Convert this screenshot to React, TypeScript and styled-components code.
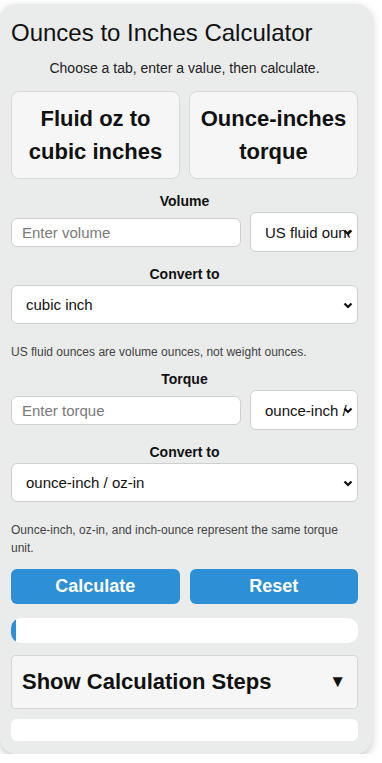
import styled, { createGlobalStyle } from "styled-components"

const GlobalStyle = createGlobalStyle`
	html, body {
		margin: 0;
		padding: 0;
		background: #ffffff;
		font-family: "Liberation Sans", Arial, sans-serif;
		color: #111;
	}
	* {
		box-sizing: border-box;
	}
`

const Page = styled.div`
	padding-top: 4px;
`

const Card = styled.div`
	width: 372px;
	background: #eaebeb;
	border-radius: 16px;
	box-shadow: 0 3px 8px rgba(0, 0, 0, 0.22);
	padding: 15px 14px 13px 11px;
	display: flex;
	flex-direction: column;
`

const Title = styled.h1`
	margin: 0;
	font-size: 24px;
	font-weight: 400;
	line-height: 28px;
	color: #111;
`

const Intro = styled.p`
	margin: 13px 0 0;
	font-size: 14px;
	line-height: 17px;
	text-align: center;
	color: #222;
`

const TabRow = styled.div`
	display: grid;
	grid-template-columns: 1fr 1fr;
	gap: 9px;
	margin-top: 14px;
`

const Tab = styled.button`
	height: 88px;
	background: #f6f6f6;
	border: 1px solid #d9d9d9;
	border-radius: 8px;
	font-family: inherit;
	font-size: 22px;
	font-weight: 700;
	line-height: 33px;
	color: #111;
	padding: 0 4px;
	cursor: pointer;
`

const FieldLabel = styled.div<{ $top: number }>`
	margin-top: ${(p) => p.$top}px;
	font-size: 14px;
	font-weight: 700;
	text-align: center;
	line-height: 17px;
	color: #111;
`

const InputRow = styled.div<{ $top: number }>`
	display: flex;
	align-items: center;
	gap: 9px;
	margin-top: ${(p) => p.$top}px;
`

const TextInput = styled.input`
	flex: 1;
	min-width: 0;
	height: 29px;
	border: 1px solid #cfcfcf;
	border-radius: 6px;
	background: #fff;
	padding: 0 10px;
	font-family: inherit;
	font-size: 15px;
	color: #111;
	outline: none;

	&::placeholder {
		color: #7a7a7a;
	}
`

const SelectWrap = styled.div<{ $w?: number; $top?: number }>`
	position: relative;
	width: ${(p) => (p.$w ? `${p.$w}px` : "100%")};
	flex: none;
	margin-top: ${(p) => p.$top ?? 0}px;
`

const Select = styled.select<{ $h: number }>`
	appearance: none;
	-webkit-appearance: none;
	display: block;
	width: 100%;
	height: ${(p) => p.$h}px;
	border: 1px solid #cfcfcf;
	border-radius: 6px;
	background: #fff;
	padding: 0 7px 0 14px;
	font-family: inherit;
	font-size: 15px;
	color: #111;
	outline: none;
	overflow: hidden;
`

const Chevron = styled.svg`
	position: absolute;
	right: 5px;
	top: 50%;
	margin-top: -3px;
	width: 10px;
	height: 7px;
	pointer-events: none;
`

const Note = styled.p<{ $top: number }>`
	margin: ${(p) => p.$top}px 0 0;
	font-size: 12px;
	line-height: 18px;
	color: #444;
`

const ButtonRow = styled.div`
	display: grid;
	grid-template-columns: 1fr 1fr;
	gap: 10px;
	margin-top: 12px;
`

const ActionButton = styled.button`
	height: 35px;
	background: #2d8fd5;
	border: none;
	border-radius: 6px;
	color: #fff;
	font-family: inherit;
	font-size: 18px;
	font-weight: 700;
	cursor: pointer;
`

const Progress = styled.div`
	margin-top: 14px;
	height: 25px;
	background: #fff;
	border-radius: 10px;
	overflow: hidden;
	display: flex;
`

const ProgressFill = styled.div`
	background: #2d8fd5;
	height: 100%;
`

const Steps = styled.details`
	margin-top: 12px;
	background: #f6f6f6;
	border: 1px solid #d6d6d6;
	border-radius: 4px;
`

const StepsSummary = styled.summary`
	list-style: none;
	display: flex;
	align-items: center;
	justify-content: space-between;
	height: 52px;
	padding: 0 11px 0 10px;
	font-size: 22px;
	font-weight: 700;
	color: #111;
	cursor: pointer;

	&::-webkit-details-marker {
		display: none;
	}
`

const Caret = styled.span`
	font-size: 17px;
`

const ResultBox = styled.div`
	margin-top: 10px;
	height: 22px;
	background: #fff;
	border-radius: 6px;
`

const ChevronIcon = () => (
	<Chevron viewBox="0 0 10 7">
		<polyline points="1.5,1.5 5,5 8.5,1.5" fill="none" stroke="#111" strokeWidth="2.2" />
	</Chevron>
)

export default function App() {
	const progress = 1.5

	return (
		<Page>
			<GlobalStyle />
			<Card>
				<Title>Ounces to Inches Calculator</Title>
				<Intro>Choose a tab, enter a value, then calculate.</Intro>

				<TabRow>
					<Tab>
						Fluid oz to
						<br />
						cubic inches
					</Tab>
					<Tab>
						Ounce-inches
						<br />
						torque
					</Tab>
				</TabRow>

				<FieldLabel $top={14}>Volume</FieldLabel>
				<InputRow $top={2}>
					<TextInput placeholder="Enter volume" />
					<SelectWrap $w={108}>
						<Select $h={40} defaultValue="usfloz">
							<option value="usfloz">US fluid ounce</option>
							<option value="ukfloz">UK fluid ounce</option>
						</Select>
						<ChevronIcon />
					</SelectWrap>
				</InputRow>

				<FieldLabel $top={14}>Convert to</FieldLabel>
				<SelectWrap $top={2}>
					<Select $h={39} defaultValue="in3">
						<option value="in3">cubic inch</option>
						<option value="cm3">cubic centimeter</option>
					</Select>
					<ChevronIcon />
				</SelectWrap>

				<Note $top={19}>US fluid ounces are volume ounces, not weight ounces.</Note>

				<FieldLabel $top={10}>Torque</FieldLabel>
				<InputRow $top={2}>
					<TextInput placeholder="Enter torque" />
					<SelectWrap $w={108}>
						<Select $h={40} defaultValue="ozin">
							<option value="ozin">ounce-inch / oz-in</option>
							<option value="lbin">pound-inch</option>
						</Select>
						<ChevronIcon />
					</SelectWrap>
				</InputRow>

				<FieldLabel $top={14}>Convert to</FieldLabel>
				<SelectWrap $top={2}>
					<Select $h={39} defaultValue="ozin">
						<option value="ozin">ounce-inch / oz-in</option>
						<option value="nm">newton-meter</option>
					</Select>
					<ChevronIcon />
				</SelectWrap>

				<Note $top={19}>Ounce-inch, oz-in, and inch-ounce represent the same torque unit.</Note>

				<ButtonRow>
					<ActionButton>Calculate</ActionButton>
					<ActionButton>Reset</ActionButton>
				</ButtonRow>

				<Progress>
					<ProgressFill style={{ width: `${progress}%` }} />
				</Progress>

				<Steps>
					<StepsSummary>
						Show Calculation Steps
						<Caret>▼</Caret>
					</StepsSummary>
				</Steps>

				<ResultBox />
			</Card>
		</Page>
	)
}
